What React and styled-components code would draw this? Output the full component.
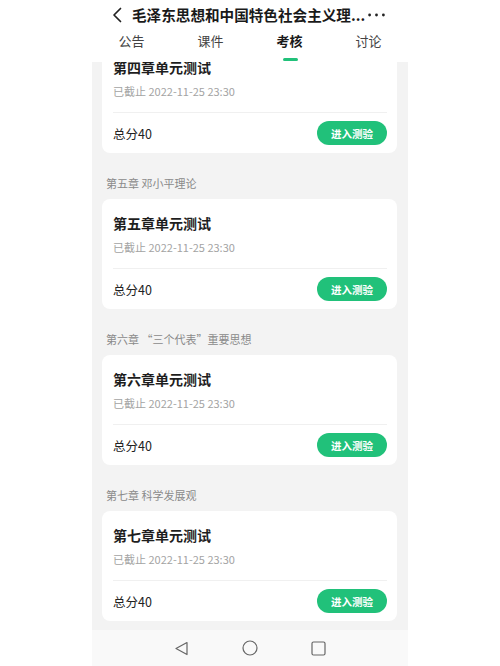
import React from 'react'
import styled, { createGlobalStyle } from 'styled-components'

const GlobalStyle = createGlobalStyle`
  html, body {
    margin: 0;
    padding: 0;
    background: #fff;
  }
  body {
    font-family: "Noto Sans CJK SC", "Noto Sans", Roboto, sans-serif;
    color: #222;
  }
`

const Phone = styled.div`
  width: 316px;
  height: 666px;
  margin: 0 auto;
  display: flex;
  flex-direction: column;
  background: #f3f3f3;
  overflow: hidden;
`

const Header = styled.div`
  background: #fff;
  flex-shrink: 0;
  position: relative;
  z-index: 1;
`

const TitleRow = styled.div`
  height: 30px;
  display: flex;
  align-items: center;
  padding-left: 20px;
`

const Title = styled.h1`
  margin: 0 3px 0 10px;
  font-size: 14.6px;
  font-weight: 700;
  line-height: 30px;
  color: #1a1a1a;
  white-space: nowrap;
  letter-spacing: 0;
`

const Tabs = styled.div`
  display: grid;
  grid-template-columns: repeat(4, 1fr);
  height: 32px;
`

const Tab = styled.div`
  position: relative;
  text-align: center;
  font-size: 13px;
  line-height: 22px;
  color: ${p => (p.active ? '#1a1a1a' : '#444')};
  font-weight: ${p => (p.active ? 700 : 400)};

  &::after {
    content: '';
    display: ${p => (p.active ? 'block' : 'none')};
    position: absolute;
    left: 50%;
    bottom: 1px;
    width: 15px;
    height: 3px;
    margin-left: -7px;
    border-radius: 2px;
    background: #21c17a;
  }
`

const Content = styled.div`
  flex: 1;
  overflow: hidden;
  padding: 0 11px 0 10px;
`

const List = styled.div`
  margin-top: -19px;
`

const ChapterLabel = styled.div`
  padding: 24px 0 10px 4px;
  font-size: 11px;
  line-height: 12px;
  color: #8a8a8a;
  white-space: nowrap;
`

const Card = styled.div`
  background: #fff;
  border-radius: 8px;
  height: 110px;
  padding: 0 10px 0 11px;
  box-sizing: border-box;
  display: flex;
  flex-direction: column;
`

const CardTop = styled.div`
  padding: 16px 0 14px;
  border-bottom: 1px solid #f0f0f0;
`

const CardTitle = styled.div`
  font-size: 14px;
  font-weight: 700;
  line-height: 16px;
  color: #1e1e1e;
`

const Deadline = styled.div`
  margin-top: 9px;
  font-size: 11px;
  line-height: 14px;
  color: #a3a3a3;
`

const CardBottom = styled.div`
  flex: 1;
  display: flex;
  align-items: center;
  justify-content: space-between;
`

const Score = styled.span`
  font-size: 12.5px;
  color: #222;
`

const EnterButton = styled.button`
  width: 70px;
  height: 24px;
  border: none;
  border-radius: 12px;
  background: #21c17a;
  color: #fff;
  font-family: inherit;
  font-size: 10.5px;
  font-weight: 700;
  padding: 0;
`

const NavBar = styled.div`
  flex-shrink: 0;
  height: 36px;
  background: #f9f9f9;
  display: flex;
  justify-content: center;
  align-items: center;
  gap: 53px;
  padding-right: 1px;
`

const BackIcon = () => (
  <svg width="10" height="16" viewBox="0 0 10 16">
    <path d="M8.5 1.5 L2 8 L8.5 14.5" fill="none" stroke="#222" strokeWidth="1.7" strokeLinecap="round" strokeLinejoin="round" />
  </svg>
)

const MoreIcon = () => (
  <svg width="17" height="6" viewBox="0 0 17 6">
    <circle cx="1.6" cy="3" r="1.4" fill="#222" />
    <circle cx="8.5" cy="3" r="1.4" fill="#222" />
    <circle cx="15.4" cy="3" r="1.4" fill="#222" />
  </svg>
)

const chapters = [
  { title: '第四章单元测试' },
  { label: '第五章 邓小平理论', title: '第五章单元测试' },
  { label: '第六章 “三个代表”重要思想', title: '第六章单元测试' },
  { label: '第七章 科学发展观', title: '第七章单元测试' },
]

const tabs = ['公告', '课件', '考核', '讨论']

const App = () => (
  <>
    <GlobalStyle />
    <Phone>
      <Header>
        <TitleRow>
          <BackIcon />
          <Title>毛泽东思想和中国特色社会主义理...</Title>
          <MoreIcon />
        </TitleRow>
        <Tabs>
          {tabs.map(t => (
            <Tab key={t} active={t === '考核'}>{t}</Tab>
          ))}
        </Tabs>
      </Header>

      <Content>
        <List>
          {chapters.map(c => (
            <div key={c.title}>
              {c.label && <ChapterLabel>{c.label}</ChapterLabel>}
              <Card>
                <CardTop>
                  <CardTitle>{c.title}</CardTitle>
                  <Deadline>已截止 2022-11-25 23:30</Deadline>
                </CardTop>
                <CardBottom>
                  <Score>总分40</Score>
                  <EnterButton>进入测验</EnterButton>
                </CardBottom>
              </Card>
            </div>
          ))}
        </List>
      </Content>

      <NavBar>
        <svg width="15" height="15" viewBox="0 0 15 15">
          <path d="M13 1.5 L2 7.5 L13 13.5 Z" fill="none" stroke="#666" strokeWidth="1.2" strokeLinejoin="round" />
        </svg>
        <svg width="16" height="16" viewBox="0 0 16 16">
          <circle cx="8" cy="8" r="7" fill="none" stroke="#666" strokeWidth="1.2" />
        </svg>
        <svg width="15" height="15" viewBox="0 0 15 15">
          <rect x="1" y="1" width="13" height="13" rx="1.5" fill="none" stroke="#666" strokeWidth="1.2" />
        </svg>
      </NavBar>
    </Phone>
  </>
)

export default App
